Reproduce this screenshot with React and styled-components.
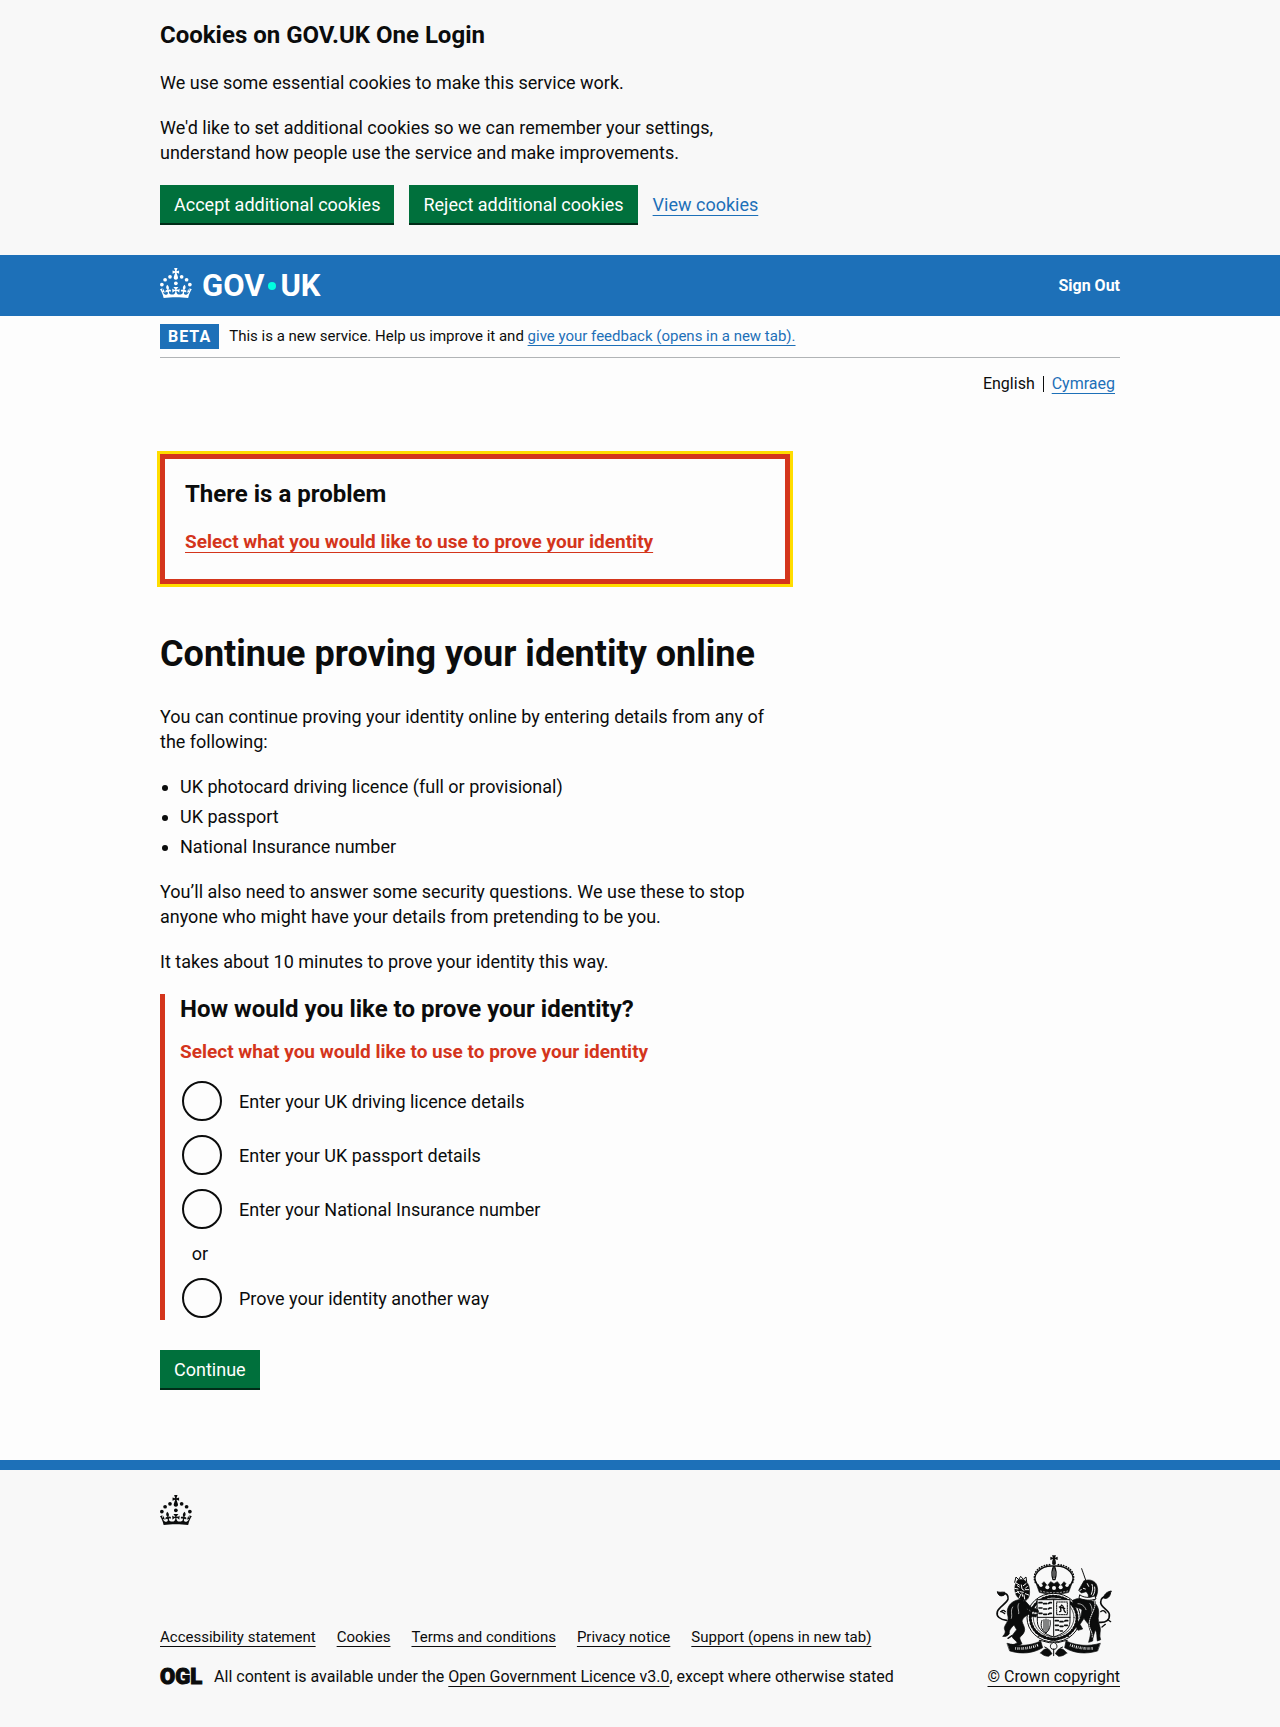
import React from "react";
import styled, { createGlobalStyle, css } from "styled-components";

const color = {
  text: "#0b0c0c",
  page: "#fdfdfd",
  panel: "#f8f8f8",
  blue: "#1d70b8",
  green: "#00703c",
  greenDark: "#002d18",
  red: "#d4351c",
  focus: "#ffdd00",
  teal: "#00ffe0",
  rule: "#b1b4b6",
};

const GlobalStyle = createGlobalStyle`
  *, *::before, *::after { box-sizing: border-box; }
  body {
    margin: 0;
    background: ${color.page};
    color: ${color.text};
    font-family: Roboto, "Liberation Sans", sans-serif;
    font-size: 18px;
    line-height: 25px;
  }
`;

const Container = styled.div`
  max-width: 960px;
  margin: 0 auto;
  @media (max-width: 1020px) {
    margin: 0 30px;
  }
`;

const TwoThirds = styled.div`
  width: calc((100% + 30px) * 2 / 3 - 30px);
  @media (max-width: 700px) {
    width: 100%;
  }
`;

const Paragraph = styled.p`
  margin: 0 0 20px;
`;

const headingM = css`
  font-size: 24px;
  line-height: 30px;
  font-weight: 700;
`;

const HeadingM = styled.h2`
  ${headingM}
  margin: 0 0 20px;
`;

const HeadingL = styled.h1`
  font-size: 36px;
  line-height: 40px;
  font-weight: 700;
  margin: 0 0 30px;
`;

const Link = styled.a`
  color: ${(p) => p.$tone || color.blue};
  font-weight: ${(p) => (p.$strong ? 700 : 400)};
  text-decoration: underline;
  text-decoration-thickness: 1px;
  text-decoration-skip-ink: none;
  text-underline-offset: 4px;
`;

const Button = styled.button`
  height: 38px;
  padding: 0 14px;
  border: 0;
  border-radius: 0;
  background: ${color.green};
  box-shadow: 0 2px 0 ${color.greenDark};
  color: #fff;
  font: inherit;
  cursor: pointer;
`;

const CookieBanner = styled.section`
  background: ${color.panel};
  padding: 20px 0 32px;
`;

const ButtonGroup = styled.div`
  display: flex;
  flex-wrap: wrap;
  align-items: center;
  gap: 15px;
`;

const Header = styled.header`
  background: ${color.blue};
  color: #fff;
`;

const HeaderRow = styled(Container)`
  display: flex;
  justify-content: space-between;
  align-items: center;
  height: 61px;
`;

const LogoLink = styled.a`
  display: flex;
  align-items: flex-start;
  gap: 10px;
  color: #fff;
  text-decoration: none;
`;

const Wordmark = styled.span`
  display: flex;
  align-items: center;
  gap: 3px;
  font-size: 31px;
  line-height: 36px;
  font-weight: 700;
`;

const WordmarkDot = styled.span`
  width: 8px;
  height: 8px;
  margin: 0 1px;
  border-radius: 50%;
  background: ${color.teal};
`;

const HeaderLink = styled.a`
  color: #fff;
  font-size: 16px;
  line-height: 20px;
  font-weight: 700;
  text-decoration: none;
`;

const PhaseBanner = styled.div`
  display: flex;
  align-items: center;
  gap: 10px;
  padding: 8px 0;
  border-bottom: 1px solid ${color.rule};
  font-size: 15px;
`;

const PhaseTag = styled.strong`
  padding: 0 8px;
  background: ${color.blue};
  color: #fff;
  font-size: 16px;
  letter-spacing: 1px;
`;

const LanguageList = styled.ul`
  display: flex;
  justify-content: flex-end;
  margin: 0;
  padding: 18px 5px 0 0;
  list-style: none;
  font-size: 16px;
  line-height: 16px;
`;

const LanguageItem = styled.li`
  & + & {
    margin-left: 8px;
    padding-left: 8px;
    border-left: 1px solid ${color.text};
  }
`;

const Main = styled.main`
  padding: 62px 0 72px;
`;

const ErrorSummary = styled.div`
  margin-bottom: 50px;
  padding: 20px 20px 25px;
  border: 5px solid ${color.red};
  outline: 3px solid ${color.focus};
`;

const BulletList = styled.ul`
  display: flex;
  flex-direction: column;
  gap: 5px;
  margin: 0 0 20px;
  padding-left: 20px;
`;

const ErrorGroup = styled.div`
  margin-bottom: 30px;
  padding-left: 15px;
  border-left: 5px solid ${color.red};
`;

const Fieldset = styled.fieldset`
  min-width: 0;
  margin: 0;
  padding: 0;
  border: 0;
`;

const Legend = styled.legend`
  ${headingM}
  padding: 0;
  margin-bottom: 15px;
`;

const ErrorMessage = styled.p`
  margin: 0 0 15px;
  color: ${color.red};
  font-size: 19px;
  font-weight: 700;
`;

const ErrorLinkLine = styled.div`
  font-size: 19px;
`;

const RadioList = styled.div`
  display: flex;
  flex-direction: column;
  gap: 10px;
`;

const RadioRow = styled.div`
  display: flex;
  align-items: center;
  height: 44px;
  padding-left: 2px;
`;

const RadioInput = styled.input`
  appearance: none;
  flex: none;
  width: 40px;
  height: 40px;
  margin: 0;
  border: 2px solid ${color.text};
  border-radius: 50%;
  &:checked {
    background: radial-gradient(${color.text} 10px, transparent 11px);
  }
`;

const RadioLabel = styled.label`
  padding: 0 17px;
`;

const Divider = styled.div`
  width: 40px;
  text-align: center;
`;

const Footer = styled.footer`
  padding: 25px 0 40px;
  border-top: 10px solid ${color.blue};
  background: ${color.panel};
  font-size: 16px;
  line-height: 20px;
`;

const FooterMeta = styled.div`
  display: flex;
  flex-wrap: wrap;
  justify-content: space-between;
  align-items: flex-end;
  gap: 20px;
  margin-top: 30px;
`;

const FooterColumn = styled.div`
  display: flex;
  flex-direction: column;
  gap: 20px;
`;

const FooterLinks = styled.ul`
  display: flex;
  flex-wrap: wrap;
  gap: 21px;
  margin: 0;
  padding: 0;
  list-style: none;
  font-size: 15px;
`;

const Licence = styled.div`
  display: flex;
  align-items: center;
  gap: 12px;
`;

const OglMark = styled.span`
  font-size: 22px;
  font-weight: 900;
  -webkit-text-stroke: 1px ${color.text};
`;

const Copyright = styled.a`
  display: flex;
  flex-direction: column;
  align-items: center;
  gap: 10px;
  color: ${color.text};
  text-decoration: underline;
  text-decoration-thickness: 1px;
  text-decoration-skip-ink: none;
  text-underline-offset: 4px;
`;

const Block = styled.svg`
  display: block;
`;

function Crown() {
  return (
    <Block width="32" height="30" viewBox="0 0 64 60" fill="currentColor" aria-hidden="true">
      <circle cx="20" cy="17.6" r="3.7" />
      <circle cx="10.2" cy="23.5" r="3.7" />
      <circle cx="3.7" cy="33.2" r="3.7" />
      <circle cx="31.7" cy="30.6" r="3.7" />
      <circle cx="43.3" cy="17.6" r="3.7" />
      <circle cx="53.2" cy="23.5" r="3.7" />
      <circle cx="59.7" cy="33.2" r="3.7" />
      <path d="M33.1,9.8c.2-.1.3-.3.5-.5l4.6,2.4v-6.8l-4.6,1.5c-.1-.2-.3-.3-.5-.5l1.9-5.9h-6.7l1.9,5.9c-.2.1-.3.3-.5.5l-4.6-1.5v6.8l4.6-2.4c.1.2.3.3.5.5l-2.6,8c-.9,2.8,1.2,5.7,4.1,5.7h0c3,0,5.1-2.9,4.1-5.7l-2.6-8ZM37,37.9s-3.4,3.8-4.1,6.1c2.2,0,4.2-.5,6.4-2.8l-.7,8.5c-2-2.8-4.4-4.1-5.7-3.8.1,3.1.5,6.7,5.8,7.2,3.7.3,6.7-1.5,7-3.8.4-2.6-2-4.3-3.7-1.6-1.4-4.5,2.4-6.1,4.9-3.2-1.9-4.5-1.8-7.7,2.4-10.9,3,4,2.6,7.3-1.2,11.1,2.4-1.3,6.2,0,4,4.6-1.2-2.8-3.7-2.2-4.2.2-.3,1.7.7,3.7,3,4.2,1.9.3,4.7-.9,7-5.9-1.3,0-2.4.7-3.9,1.7l2.4-8c.6,2.3,1.4,3.7,2.2,4.5.6-1.6.5-2.8,0-5.3l5,1.8c-2.6,3.6-5.2,8.7-7.3,17.5-7.4-1.1-15.7-1.7-24.5-1.7h0c-8.8,0-17.1.6-24.5,1.7-2.1-8.9-4.7-13.9-7.3-17.5l5-1.8c-.5,2.5-.6,3.7,0,5.3.8-.8,1.6-2.3,2.2-4.5l2.4,8c-1.5-1-2.6-1.7-3.9-1.7,2.3,5,5.2,6.2,7,5.9,2.3-.4,3.3-2.4,3-4.2-.5-2.4-3-3.1-4.2-.2-2.2-4.6,1.6-6,4-4.6-3.7-3.7-4.2-7.1-1.2-11.1,4.2,3.2,4.3,6.4,2.4,10.9,2.5-2.8,6.3-1.3,4.9,3.2-1.8-2.7-4.1-1-3.7,1.6.3,2.3,3.3,4.1,7,3.8,5.4-.5,5.7-4.2,5.8-7.2-1.3-.2-3.7,1-5.7,3.8l-.7-8.5c2.2,2.3,4.2,2.7,6.4,2.8-.7-2.3-4.1-6.1-4.1-6.1h10.6Z" />
    </Block>
  );
}

function CoatOfArms() {
  const ink = color.text;
  const paper = color.panel;
  return (
    <Block width="125" height="102" viewBox="95 76 375 306" fill="none" stroke={ink} strokeLinecap="round" strokeLinejoin="round" aria-hidden="true">
      {/* orb and cross */}
      <g stroke="none" fill={ink}>
        <path d="M281 84l-3-7h12l-3 7 8-3v10l-8-3 3 8h-12l3-8-8 3V81z" />
        <circle cx="284" cy="100" r="6" />
      </g>
      {/* crown arches */}
      <path d="M232 162c-16-26 10-54 48-53M336 162c16-26-10-54-48-53" strokeWidth="4" />
      <path d="M228 158c-12-30 14-54 50-53M340 158c12-30-14-54-50-53" strokeWidth="5" strokeDasharray="1 7" />
      <path d="M284 108c-6 10-8 26-3 42h6c5-16 3-32-3-42z" fill={paper} strokeWidth="4" />
      <path d="M284 116v28" strokeWidth="4" />
      {/* crown rim */}
      <path d="M230 160l10 28c28 8 60 8 88 0l10-28-12 8-12-12-10 12-10-12-10 6-10-6-10 12-10-12-12 12z" fill={ink} strokeWidth="2" />
      <g fill={paper} stroke="none">
        <circle cx="245" cy="167" r="5" />
        <circle cx="264" cy="173" r="6" />
        <circle cx="284" cy="175" r="6" />
        <circle cx="304" cy="173" r="6" />
        <circle cx="323" cy="167" r="5" />
      </g>
      <path d="M243 184c26 7 56 7 82 0" stroke={paper} strokeWidth="2" strokeDasharray="4 6" />
      {/* garter */}
      <ellipse cx="283" cy="264" rx="80" ry="73" fill={paper} strokeWidth="3" />
      <ellipse cx="283" cy="264" rx="70" ry="64" strokeWidth="9" strokeDasharray="3 7" />
      <ellipse cx="283" cy="264" rx="61" ry="57" strokeWidth="2" />
      {/* shield */}
      <path d="M234 210h98v66c0 24-24 38-49 46-25-8-49-22-49-46z" fill={paper} strokeWidth="3" />
      <path d="M283 210v110M234 263h98" strokeWidth="3" />
      <path d="M239 219h10l4 3h14l4-3h8M239 235h10l4 3h14l4-3h8M239 251h10l4 3h14l4-3h8" strokeWidth="5" strokeDasharray="9 6" />
      <path d="M292 217h32v38h-32z" strokeWidth="3" strokeDasharray="4 3" />
      <path d="M301 246c10-2-4-12 6-20 10 4 2 14 11 22M300 232l16 4" strokeWidth="4" />
      <path d="M248 272c-6 14-2 30 12 38 10-8 15-22 12-38M254 270v32M260 268v38M266 270v32" strokeWidth="3" />
      <path d="M288 273h10l4 3h12l4-3h8M288 287h10l4 3h10l4-3h8M289 301h8l4 3h8" strokeWidth="5" strokeDasharray="9 6" />
      {/* lion */}
      <g fill={ink} strokeWidth="2">
        <path d="M190 208c-24 2-42 12-46 34-2 12 4 16 2 28-4 14-14 20-10 30 4 8 0 14-6 20 8 2 16-2 20-8-2-10 6-18 14-26l8 14-14 18c0 10 14 14 16 22-8 2-10 6-18 4 8 4 26 4 32-2-4-8-8-14-6-20 8-6 14-14 14-22 0-10-6-16-8-26 4-12 12-16 22-22z" />
        <path d="M196 212l18 20 22 8 2 8-12-1-22-10-16-14zM190 246l18-6 10 14 16 0-4 8-16-2-10-10-14 6z" />
      </g>
      <path d="M176 150c-8 10-12 24-8 38 2 14 14 24 32 24 10-6 12-20 10-34 0-12-8-24-18-28z" fill={ink} strokeWidth="2" />
      <path d="M170 160l10 6M166 176l10 2M168 190l10-4M180 204l4-10M196 208l-2-12M208 196l-10-4M208 180l-10 0M200 162l-8 6M186 166l2 12 6 4M182 186l10 2M174 168l6 4M174 184l6 8M204 170l-6 6M190 200l-2-8" stroke={paper} strokeWidth="3" />
      <path d="M166 158l4-16 8 8 6-10 8 9 8-7 2 14" strokeWidth="3" />
      <path d="M142 272c-20-2-32-12-28-26 4-14 28-24 32-38 2-12-6-18-14-16" strokeWidth="5" />
      <path d="M134 196c-8 6-18 2-20-10 6 4 14 0 22 2 4 2 2 6-2 8z" fill={ink} strokeWidth="3" />
      <path d="M138 246c-6-6-8-4-14 0 6 0 8 4 12 6M150 292l-8 8M158 318l-12 8" strokeWidth="4" />
      <path d="M160 232c-8 12 0 22-4 34M178 222c-6 10 2 20 0 30" stroke={paper} strokeWidth="2" />
      {/* unicorn */}
      <path d="M380 154l-13-37" strokeWidth="3" strokeDasharray="5 2" />
      <g fill={ink} strokeWidth="2">
        <path d="M374 154c10-6 28-4 36 8 8 14 6 32-4 46l-20 2c4-12 0-20-6-24l-14 4-8-8c6-10 10-20 16-28z" />
        <path d="M340 212c14-8 34-8 54 0 18 8 26 24 24 42-4 18 2 28 4 38 4 10-4 24 2 38l-10 4c-2-14 0-22-6-34-4 14-8 24-8 34l-12 4c4-16 8-28 4-42-2-14-12-18-18-30l-12 18 8 14-14 4-8-14 16-22 4-26c-8-6-18-6-28-10z" />
      </g>
      <path d="M384 162l4 8M372 176l6 2M398 164c4 10 2 18-2 30M406 172c2 10 0 18-6 28M362 182l4-2" stroke={paper} strokeWidth="3" />
      <path d="M356 222c12 0 20 8 24 18M392 222c8 12 8 26 4 38" stroke={paper} strokeWidth="2" />
      <path d="M362 196c10 8 30 10 44 2l4 10c-16 6-36 4-50-2z" fill={paper} strokeWidth="3" />
      <path d="M404 212c12 22-18 48-14 76 2 14 12 22 8 38" strokeWidth="6" />
      <path d="M404 212c12 22-18 48-14 76 2 14 12 22 8 38" stroke={paper} strokeWidth="3" strokeDasharray="3 4" />
      <path d="M420 278c20 2 32-8 30-24-2-14-26-20-26-36 0-12 8-18 18-16" strokeWidth="5" />
      <path d="M432 204c4-12 12-18 24-20-4 6-2 12-8 18-4 4-12 6-16 2z" fill={ink} strokeWidth="3" />
      <path d="M424 246c8-6 12-2 16 4M428 292l10-8M446 270l8 6" strokeWidth="4" />
      {/* motto scroll */}
      <path d="M144 341c34 10 68 8 100-7l6 20c-30 18-64 20-98 10zM422 341c-34 10-68 8-102-7l-4 20c30 18 64 20 98 10z" fill={ink} strokeWidth="2" />
      <path d="M168 356c24 2 46-1 68-10M332 346c24 9 46 12 70 10" stroke={paper} strokeWidth="8" strokeLinecap="butt" strokeDasharray="2 4 3 3" />
      {/* ground and badges */}
      <path d="M236 322c14-10 22-2 30 6 10 6 24 6 34 0 8-8 18-14 30-6M240 332c16 2 24 8 42 8s26-6 42-8" strokeWidth="3" />
      <path d="M244 370c8-12 18-16 26-10l8 12-10 8c-10 0-18-4-24-10zM322 370c-8-12-18-16-26-10l-8 12 10 8c10 0 18-4 24-10z" fill={ink} strokeWidth="2" />
      <path d="M283 338c-10 4-12 12-8 18 4 4 12 4 16 0 4-6 2-14-8-18zM283 358v20M256 352l8 4M310 352l-8 4" fill={paper} strokeWidth="3" />
    </Block>
  );
}

const documents = [
  "UK photocard driving licence (full or provisional)",
  "UK passport",
  "National Insurance number",
];

const options = [
  { id: "drivingLicence", label: "Enter your UK driving licence details" },
  { id: "passport", label: "Enter your UK passport details" },
  { id: "nationalInsurance", label: "Enter your National Insurance number" },
];

const footerLinks = [
  "Accessibility statement",
  "Cookies",
  "Terms and conditions",
  "Privacy notice",
  "Support (opens in new tab)",
];

const errorText = "Select what you would like to use to prove your identity";

function Radio({ id, label }) {
  return (
    <RadioRow>
      <RadioInput type="radio" name="journey" id={id} value={id} />
      <RadioLabel htmlFor={id}>{label}</RadioLabel>
    </RadioRow>
  );
}

export default function App() {
  return (
    <>
      <GlobalStyle />
      <CookieBanner aria-label="Cookies on GOV.UK One Login">
        <Container>
          <TwoThirds>
            <HeadingM>Cookies on GOV.UK One Login</HeadingM>
            <Paragraph>We use some essential cookies to make this service work.</Paragraph>
            <Paragraph>
              We'd like to set additional cookies so we can remember your settings, understand how people use the
              service and make improvements.
            </Paragraph>
            <ButtonGroup>
              <Button type="button">Accept additional cookies</Button>
              <Button type="button">Reject additional cookies</Button>
              <Link href="#cookies">View cookies</Link>
            </ButtonGroup>
          </TwoThirds>
        </Container>
      </CookieBanner>

      <Header>
        <HeaderRow>
          <LogoLink href="#home" aria-label="GOV.UK">
            <Crown />
            <Wordmark>
              GOV
              <WordmarkDot />
              UK
            </Wordmark>
          </LogoLink>
          <HeaderLink href="#sign-out">Sign Out</HeaderLink>
        </HeaderRow>
      </Header>

      <Container>
        <PhaseBanner>
          <PhaseTag>BETA</PhaseTag>
          <span>
            This is a new service. Help us improve it and{" "}
            <Link href="#feedback">give your feedback (opens in a new tab).</Link>
          </span>
        </PhaseBanner>
        <nav aria-label="Language">
          <LanguageList>
            <LanguageItem>English</LanguageItem>
            <LanguageItem>
              <Link href="#cy">Cymraeg</Link>
            </LanguageItem>
          </LanguageList>
        </nav>

        <Main>
          <TwoThirds>
            <ErrorSummary role="alert">
              <HeadingM>There is a problem</HeadingM>
              <ErrorLinkLine>
                <Link href="#drivingLicence" $tone={color.red} $strong>
                  {errorText}
                </Link>
              </ErrorLinkLine>
            </ErrorSummary>

            <HeadingL>Continue proving your identity online</HeadingL>
            <Paragraph>
              You can continue proving your identity online by entering details from any of the following:
            </Paragraph>
            <BulletList>
              {documents.map((item) => (
                <li key={item}>{item}</li>
              ))}
            </BulletList>
            <Paragraph>
              You’ll also need to answer some security questions. We use these to stop anyone who might have your
              details from pretending to be you.
            </Paragraph>
            <Paragraph>It takes about 10 minutes to prove your identity this way.</Paragraph>

            <form>
              <ErrorGroup>
                <Fieldset>
                  <Legend>How would you like to prove your identity?</Legend>
                  <ErrorMessage>{errorText}</ErrorMessage>
                  <RadioList>
                    {options.map((option) => (
                      <Radio key={option.id} {...option} />
                    ))}
                    <Divider>or</Divider>
                    <Radio id="another" label="Prove your identity another way" />
                  </RadioList>
                </Fieldset>
              </ErrorGroup>
              <Button type="button">Continue</Button>
            </form>
          </TwoThirds>
        </Main>
      </Container>

      <Footer>
        <Container>
          <Crown />
          <FooterMeta>
            <FooterColumn>
              <FooterLinks>
                {footerLinks.map((item) => (
                  <li key={item}>
                    <Link href="#footer" $tone={color.text}>
                      {item}
                    </Link>
                  </li>
                ))}
              </FooterLinks>
              <Licence>
                <OglMark>OGL</OglMark>
                <span>
                  All content is available under the{" "}
                  <Link href="#licence" $tone={color.text}>
                    Open Government Licence v3.0
                  </Link>
                  , except where otherwise stated
                </span>
              </Licence>
            </FooterColumn>
            <Copyright href="#copyright">
              <CoatOfArms />
              <span>© Crown copyright</span>
            </Copyright>
          </FooterMeta>
        </Container>
      </Footer>
    </>
  );
}
